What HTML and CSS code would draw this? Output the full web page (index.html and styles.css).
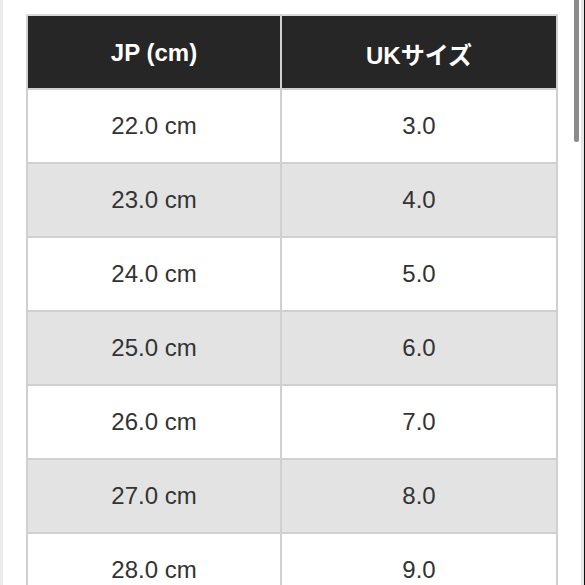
FILE: index.html
```html
<!DOCTYPE html>
<html lang="ja">
<head>
<meta charset="utf-8">
<title>Size chart</title>
<link rel="stylesheet" href="styles.css">
</head>
<body>
<div class="page">
  <table class="size-table">
    <colgroup>
      <col class="col-jp">
      <col class="col-uk">
    </colgroup>
    <thead>
      <tr><th>JP (cm)</th><th>UKサイズ</th></tr>
    </thead>
    <tbody>
      <tr><td>22.0 cm</td><td>3.0</td></tr>
      <tr><td>23.0 cm</td><td>4.0</td></tr>
      <tr><td>24.0 cm</td><td>5.0</td></tr>
      <tr><td>25.0 cm</td><td>6.0</td></tr>
      <tr><td>26.0 cm</td><td>7.0</td></tr>
      <tr><td>27.0 cm</td><td>8.0</td></tr>
      <tr><td>28.0 cm</td><td>9.0</td></tr>
    </tbody>
  </table>
</div>
<div class="scroll-track"></div>
<div class="scroll-thumb"></div>
</body>
</html>
```

FILE: styles.css
```css
html, body {
  margin: 0;
  padding: 0;
  height: 585px;
  overflow: hidden;
  background: #ffffff;
  font-family: "Liberation Sans", Arial, "Noto Sans CJK JP", sans-serif;
}

.page {
  border-left: 3px solid #ececec;
  padding: 14px 0 0 23px;
  height: 585px;
  box-sizing: border-box;
}

.size-table {
  border-collapse: collapse;
  width: 530px;
  table-layout: fixed;
}

.col-jp { width: 254px; }
.col-uk { width: 276px; }

.size-table th,
.size-table td {
  border: 2px solid #d0d0d0;
  height: 72px;
  padding: 0;
  text-align: center;
  vertical-align: middle;
  font-size: 24px;
}

.size-table th {
  background: #262626;
  color: #ffffff;
  font-weight: 700;
  height: 70px;
  padding-top: 2px;
  border-top-color: #d8d8d8;
}

.size-table th + th {
  border-left-color: #bdbdbd;
}

.size-table td {
  color: #333333;
  background: #ffffff;
}

.size-table tbody tr:nth-child(even) td {
  background: #e3e3e3;
}

.scroll-track {
  position: absolute;
  top: 0;
  right: 0;
  width: 3px;
  height: 585px;
  background: #e6e6e6;
  border-right: 1px solid #111111;
}

.scroll-thumb {
  position: absolute;
  top: 0;
  left: 574px;
  width: 5px;
  height: 142px;
  background: #8c8c8c;
  border-radius: 0 0 2px 2px;
}
```
